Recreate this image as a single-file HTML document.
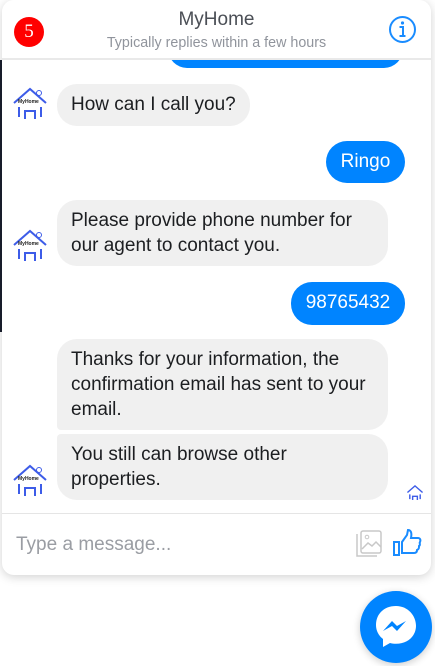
<!DOCTYPE html>
<html><head><style>
body{margin:0;width:435px;height:666px;background:#fff;position:relative;overflow:hidden;font-family:"Liberation Sans",Arial,sans-serif}
.panel{position:absolute;left:2px;top:0;width:429px;height:575px;border-radius:12px;background:#fff;box-shadow:0 2px 10px rgba(0,0,0,.18);overflow:hidden}
.b{position:absolute;font-size:19px;line-height:25px;color:#1c1e21;background:#f0f0f0;border-radius:20px;box-sizing:border-box;padding:8px 14px;white-space:nowrap}
.me{background:#0084ff;color:#fff;border-radius:21px;text-align:center;padding:8px 0}
.av{position:absolute;width:36px;height:36px}
</style></head><body>
<div style="position:absolute;left:0;top:60px;width:2px;height:272px;background:#1a1f2e"></div>
<div class="panel">
 <div style="position:absolute;left:0;top:0;width:100%;height:58px;border-bottom:2px solid #e9e9e9;background:#fff;z-index:2">
  <div style="position:absolute;left:12px;top:17px;width:30px;height:30px;border-radius:50%;background:#f00;color:#fff;font-family:'Liberation Serif',serif;font-size:19px;line-height:30px;text-align:center">5</div>
  <div style="position:absolute;left:0;right:0;top:9px;text-align:center;font-size:19px;color:#4b4f56">MyHome</div>
  <div style="position:absolute;left:0;right:0;top:35px;text-align:center;font-size:14.3px;color:#90949c">Typically replies within a few hours</div>
  <svg style="position:absolute;left:386px;top:15px" width="29" height="29" viewBox="0 0 29 29"><circle cx="14.5" cy="14.5" r="12.5" fill="none" stroke="#1a8cff" stroke-width="2"/><circle cx="14.5" cy="8" r="1.6" fill="#1a8cff"/><path d="M11.5 12h3.5v9M11.5 21h6" fill="none" stroke="#1a8cff" stroke-width="2"/></svg>
 </div>
 <div class="b me" style="left:166px;top:30px;width:235px;height:38px"></div>
 <svg class="av" style="left:10px;top:85px" viewBox="0 0 36 36"><path d="M2 18L18 4 34 18M7 22v10M29 22v10M13 34V26h10v8" fill="none" stroke="#3d5ce8" stroke-width="2"/><text x="6" y="18" font-size="5" font-weight="bold" fill="#222" font-family="Liberation Sans">MyHome</text><circle cx="27" cy="8" r="2.5" fill="none" stroke="#3d5ce8"/></svg>
 <div class="b" style="left:55px;top:84px;width:193px;height:42px">How can I call you?</div>
 <div class="b me" style="left:324px;top:141px;width:79px;height:42px">Ringo</div>
 <svg class="av" style="left:10px;top:227px" viewBox="0 0 36 36"><path d="M2 18L18 4 34 18M7 22v10M29 22v10M13 34V26h10v8" fill="none" stroke="#3d5ce8" stroke-width="2"/><text x="6" y="18" font-size="5" font-weight="bold" fill="#222" font-family="Liberation Sans">MyHome</text><circle cx="27" cy="8" r="2.5" fill="none" stroke="#3d5ce8"/></svg>
 <div class="b" style="left:55px;top:200px;width:331px;height:66px">Please provide phone number for<br>our agent to contact you.</div>
 <div class="b me" style="left:289px;top:282px;width:114px;height:43px">98765432</div>
 <div class="b" style="left:55px;top:339px;width:331px;height:91px;border-radius:20px 20px 20px 4px">Thanks for your information, the<br>confirmation email has sent to your<br>email.</div>
 <div class="b" style="left:55px;top:434px;width:331px;height:66px;border-radius:4px 20px 20px 20px">You still can browse other<br>properties.</div>
 <svg class="av" style="left:10px;top:462px" viewBox="0 0 36 36"><path d="M2 18L18 4 34 18M7 22v10M29 22v10M13 34V26h10v8" fill="none" stroke="#3d5ce8" stroke-width="2"/><text x="6" y="18" font-size="5" font-weight="bold" fill="#222" font-family="Liberation Sans">MyHome</text><circle cx="27" cy="8" r="2.5" fill="none" stroke="#3d5ce8"/></svg>
 <svg style="position:absolute;left:404px;top:484px" width="18" height="17" viewBox="0 0 36 36"><path d="M2 18L18 4 34 18M7 22v10M29 22v10M13 34V26h10v8" fill="none" stroke="#3d5ce8" stroke-width="3"/></svg>
 <div style="position:absolute;left:0;top:513px;width:100%;height:1px;background:#e5e5e5"></div>
 <div style="position:absolute;left:14px;top:534px;font-size:19px;color:#9a9da3">Type a message...</div>
 <svg style="position:absolute;left:350px;top:529px" width="32" height="30" viewBox="0 0 32 30"><path d="M5 5v22h20" fill="none" stroke="#c8c8c8" stroke-width="1.5"/><rect x="9" y="2" width="20" height="22" rx="2" fill="none" stroke="#c8c8c8" stroke-width="1.5"/><circle cx="15" cy="8" r="1.8" fill="none" stroke="#c8c8c8"/><path d="M10 20l6-6 4 3 4-4 5 5" fill="none" stroke="#c8c8c8" stroke-width="1.5"/></svg>
 <svg style="position:absolute;left:390px;top:528px" width="30" height="30" viewBox="0 0 30 30"><rect x="2" y="14" width="5" height="13" fill="none" stroke="#1a8cff" stroke-width="2"/><path d="M10 14l5-7 1-5c3 0 4 3 3 8h7c2 0 3 2 2 4-1 1 1 3-1 4 0 2 0 3-2 4 0 2-1 3-3 3H10z" fill="none" stroke="#1a8cff" stroke-width="2"/></svg>
</div>
<div style="position:absolute;left:360px;top:591px;width:72px;height:72px;border-radius:50%;background:#0084ff;box-shadow:0 2px 8px rgba(0,0,0,.2)"></div>
<svg style="position:absolute;left:370px;top:600px" width="52" height="54" viewBox="0 0 52 54"><path d="M26 6C14 6 6 14 6 25c0 6 3 11 7 14v8l7-4c2 .5 4 .8 6 .8 12 0 20-8 20-18S38 6 26 6z" fill="#fff"/><path d="M13 31l9-10 5 5 9-5-9 10-5-5z" fill="#0084ff"/></svg>
</body></html>
